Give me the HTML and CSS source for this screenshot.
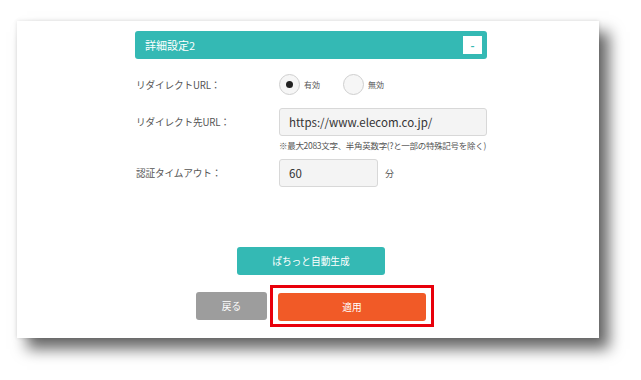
FILE: index.html
```html
<!DOCTYPE html>
<html lang="ja">
<head>
<meta charset="utf-8">
<title>詳細設定2</title>
<link rel="stylesheet" href="styles.css">
</head>
<body>
<div class="card">
  <div class="panel">
    <div class="header">
      <span class="header-title">詳細設定2</span>
      <span class="toggle">-</span>
    </div>
    <div class="row row-radio">
      <div class="label">リダイレクトURL：</div>
      <div class="field radios">
        <span class="radio checked"></span><span class="radio-text">有効</span>
        <span class="radio"></span><span class="radio-text">無効</span>
      </div>
    </div>
    <div class="row row-url">
      <div class="label">リダイレクト先URL：</div>
      <div class="field">
        <div class="input input-url">https://www.elecom.co.jp/</div>
      </div>
    </div>
    <div class="note">※最大2083文字、半角英数字(?と一部の特殊記号を除く)</div>
    <div class="row row-timeout">
      <div class="label">認証タイムアウト：</div>
      <div class="field">
        <div class="input input-num">60</div>
        <span class="unit">分</span>
      </div>
    </div>
    <div class="auto-wrap">
      <button class="btn btn-auto">ぱちっと自動生成</button>
    </div>
    <div class="actions">
      <button class="btn btn-back">戻る</button>
      <div class="highlight">
        <button class="btn btn-apply">適用</button>
      </div>
    </div>
  </div>
</div>
</body>
</html>
```
FILE: styles.css
```css
* { box-sizing: border-box; }
html, body {
  margin: 0;
  padding: 0;
  background: #ffffff;
}
body {
  width: 641px;
  height: 380px;
  overflow: hidden;
  font-family: "Noto Sans CJK JP", "Noto Sans", sans-serif;
  color: #555;
  padding: 21px 0 0 17px;
}
.card {
  width: 582px;
  height: 317px;
  background: #fff;
  box-shadow: 10px 11px 14px rgba(0, 0, 0, 0.6), 0 0 4px rgba(0, 0, 0, 0.12);
  padding: 10px 0 0 118px;
}
.panel {
  width: 352px;
}
.header {
  height: 28px;
  background: #34b9b4;
  border-radius: 3px;
  display: flex;
  align-items: center;
  justify-content: space-between;
  padding: 0 5px 0 10px;
}
.header-title {
  color: #fff;
  font-size: 11px;
}
.toggle {
  width: 19px;
  height: 18px;
  background: #fff;
  color: #34b9b4;
  font-size: 11px;
  font-weight: bold;
  display: flex;
  align-items: center;
  justify-content: center;
  line-height: 1;
}
.row {
  display: flex;
  align-items: center;
}
.label {
  width: 144px;
  font-size: 9.7px;
  padding-left: 1px;
  color: #555;
  letter-spacing: -0.2px;
}
.field {
  display: flex;
  align-items: center;
}
.row-radio { margin-top: 15px; height: 21px; }
.radio {
  width: 21px;
  height: 21px;
  border-radius: 50%;
  border: 1px solid #cfcfcf;
  background: #f6f6f6;
  display: flex;
  align-items: center;
  justify-content: center;
}
.radio.checked::after {
  content: "";
  width: 7px;
  height: 7px;
  border-radius: 50%;
  background: #222;
}
.radio-text {
  font-size: 8px;
  margin-left: 4px;
  margin-right: 23px;
  color: #555;
}
.row-url { margin-top: 13px; }
.input {
  height: 28px;
  background: #f4f4f4;
  border: 1px solid #d8d8d8;
  border-radius: 3px;
  display: flex;
  align-items: center;
  padding-left: 9px;
  font-size: 11.5px;
  color: #333;
}
.input-url { width: 208px; }
.note {
  margin: 3px 0 0 144px;
  font-size: 8.5px;
  color: #555;
  letter-spacing: -0.3px;
  white-space: nowrap;
}
.row-timeout { margin-top: 8px; }
.input-num { width: 99px; }
.unit {
  font-size: 9px;
  margin-left: 7px;
}
.auto-wrap {
  margin-top: 60px;
  padding-left: 102px;
}
.btn {
  border: none;
  border-radius: 3px;
  color: #fff;
  font-family: "Noto Sans CJK JP", "Noto Sans", sans-serif;
  font-size: 9.7px;
  height: 28px;
  padding: 0;
  display: block;
}
.btn-auto {
  width: 148px;
  background: #34b9b4;
}
.actions {
  margin-top: 10px;
  display: flex;
  align-items: center;
  padding-left: 61px;
}
.btn-back {
  width: 71px;
  background: #9d9d9d;
}
.highlight {
  margin-left: 3px;
  border: 3px solid #e8000b;
  padding: 5px 5px;
  width: 164px;
  height: 42px;
}
.btn-apply {
  width: 148px;
  background: #f15a27;
}
```
